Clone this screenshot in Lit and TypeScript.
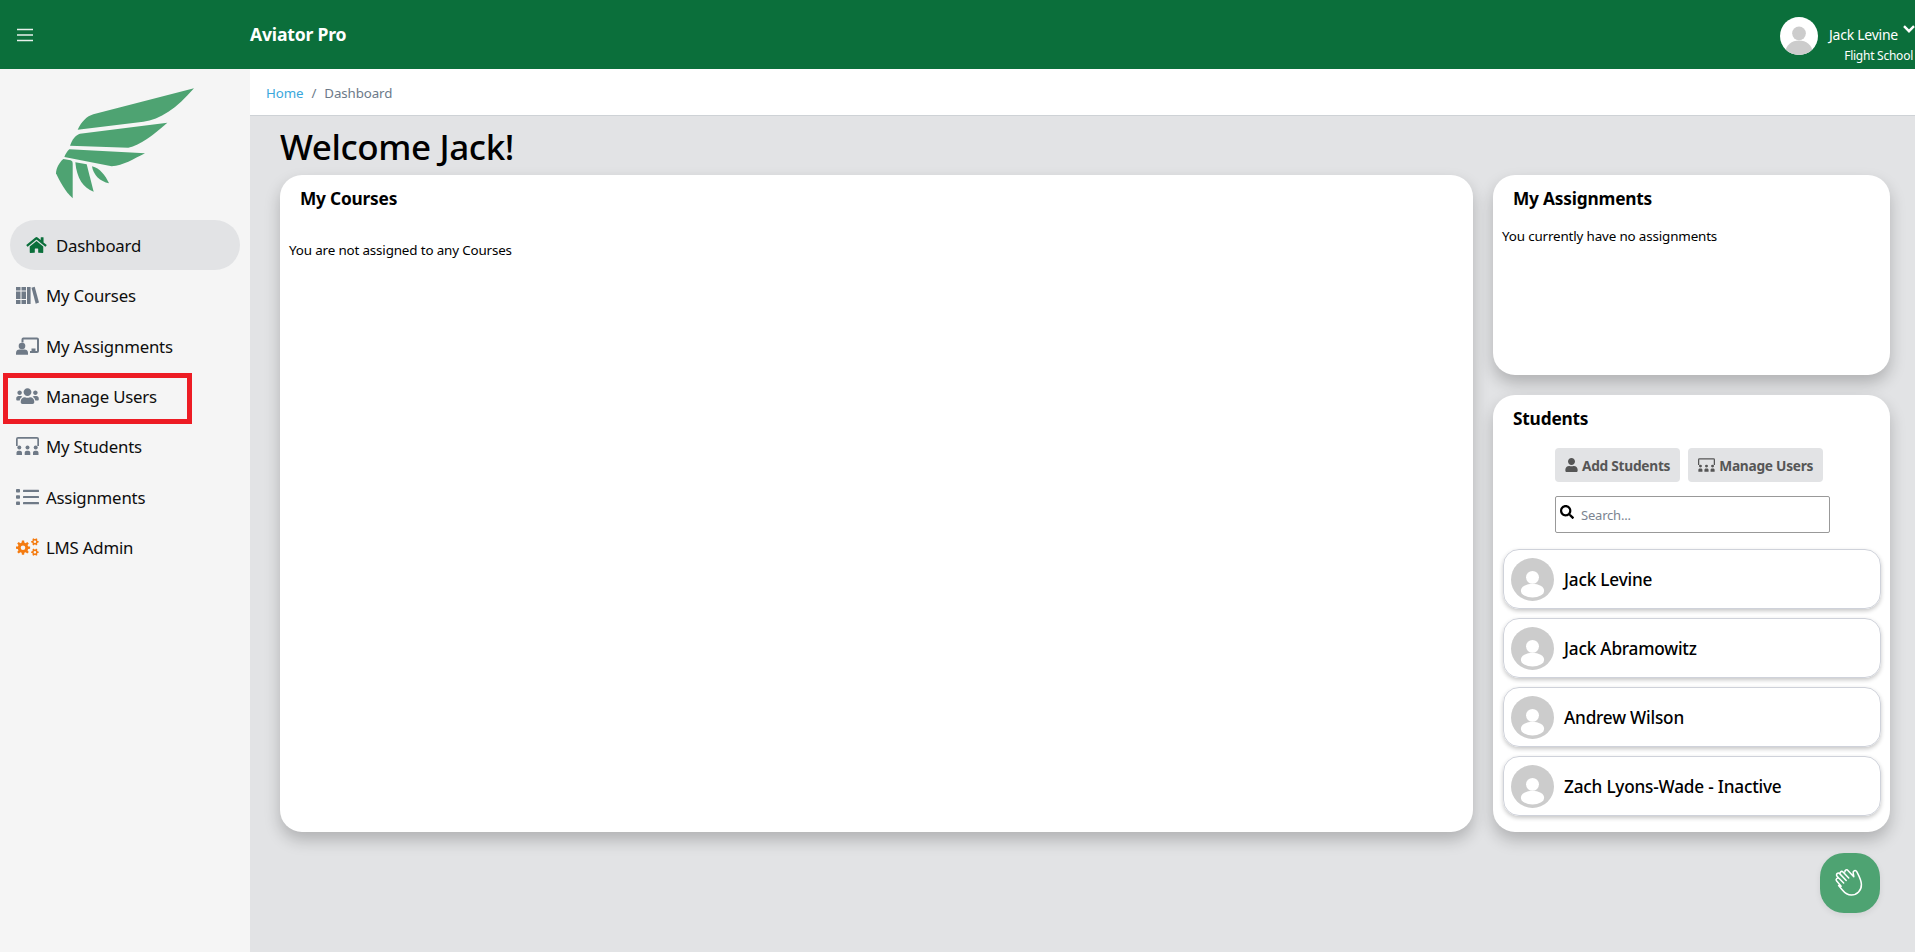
import { LitElement, html, css, svg } from "lit";
import { customElement } from "lit/decorators.js";

const fa = (vb: string, d: string) => html`<svg class="ico" viewBox=${vb} fill="currentColor"><path d=${d}></path></svg>`;
const homeP = "M280.37 148.26L96 300.11V464a16 16 0 0 0 16 16l112.06-.29a16 16 0 0 0 15.92-16V368a16 16 0 0 1 16-16h64a16 16 0 0 1 16 16v95.64a16 16 0 0 0 16 16.05L464 480a16 16 0 0 0 16-16V300L295.67 148.26a12.19 12.19 0 0 0-15.3 0zM571.6 251.47L488 182.56V44.05a12 12 0 0 0-12-12h-56a12 12 0 0 0-12 12v72.61L318.47 43a48 48 0 0 0-61 0L4.34 251.47a12 12 0 0 0-1.6 16.9l25.5 31A12 12 0 0 0 45.15 301l235.22-193.74a12.19 12.19 0 0 1 15.3 0L530.9 301a12 12 0 0 0 16.9-1.6l25.5-31a12 12 0 0 0-1.7-16.93z";
const usersP = "M96 224c35.3 0 64-28.7 64-64s-28.7-64-64-64-64 28.7-64 64 28.7 64 64 64zm448 0c35.3 0 64-28.7 64-64s-28.7-64-64-64-64 28.7-64 64 28.7 64 64 64zm32 32h-64c-17.6 0-33.5 7.1-45.1 18.6 40.3 22.1 68.9 62 75.1 109.4h66c17.7 0 32-14.3 32-32v-32c0-35.3-28.7-64-64-64zm-256 0c61.9 0 112-50.1 112-112S381.9 32 320 32 208 82.1 208 144s50.1 112 112 112zm76.8 32h-8.3c-20.8 10-43.9 16-68.5 16s-47.6-6-68.5-16h-8.3C179.6 288 128 339.6 128 403.2V432c0 26.5 21.5 48 48 48h288c26.5 0 48-21.5 48-48v-28.8c0-63.6-51.6-115.2-115.2-115.2zm-223.7-13.4C161.5 263.1 145.6 256 128 256H64c-35.3 0-64 28.7-64 64v32c0 17.7 14.3 32 32 32h65.9c6.3-47.4 34.9-87.3 75.2-109.4z";
const userP = "M224 256c70.7 0 128-57.3 128-128S294.7 0 224 0 96 57.3 96 128s57.3 128 128 128zm89.6 32h-16.7c-22.2 10.2-46.9 16-72.9 16s-50.6-5.8-72.9-16h-16.7C60.2 288 0 348.2 0 422.4V464c0 26.5 21.5 48 48 48h352c26.5 0 48-21.5 48-48v-41.6c0-74.2-60.2-134.4-134.4-134.4z";
const searchP = "M505 442.7L405.3 343c-4.5-4.5-10.6-7-17-7H372c27.6-35.3 44-79.7 44-128C416 93.1 322.9 0 208 0S0 93.1 0 208s93.1 208 208 208c48.3 0 92.7-16.4 128-44v16.3c0 6.4 2.5 12.5 7 17l99.7 99.7c9.4 9.4 24.6 9.4 33.9 0l28.3-28.3c9.4-9.4 9.4-24.6.1-34zM208 336c-70.7 0-128-57.2-128-128 0-70.7 57.2-128 128-128 70.7 0 128 57.2 128 128 0 70.7-57.2 128-128 128z";

const booksI = html`<svg class="ico" viewBox="0 0 23 18" fill="currentColor">
  <path d="M0 1h4.500v3.500H0zM0 5.500h4.500v7.500H0zM0 14h4.500v4H0zM5.500 1H10v3.500H5.500zM5.500 5.500H10v7.500H5.500zM5.500 14H10v4H5.500zM11 1h3.600v17H11z"></path>
  <path d="M15.500 1.800l3.200-1 4.300 15.700-3.300 1.200z"></path></svg>`;
const assignI = html`<svg class="ico" viewBox="0 0 23 18" fill="currentColor">
  <path d="M7 0.500h14a2 2 0 0 1 2 2v11.500a2 2 0 0 1-2 2h-7v-2h1.500v-2.500h4v2.500h1.500V2.500H7.500V5.500H5.500V2.500a2 2 0 0 1 1.500-2z"></path>
  <circle cx="6" cy="9" r="3.300"></circle>
  <path d="M0 16c0-2.500 1.500-3.500 3.500-3.500h5c2 0 3.500 1 3.500 3.500v1.800H0z"></path></svg>`;
const studentsI = html`<svg class="ico wide" viewBox="0 0 23 18" fill="currentColor">
  <path d="M2 0h19a2 2 0 0 1 2 2v7h-1.700V1.700H1.700V9H0V2a2 2 0 0 1 2-2z"></path>
  <circle cx="3.300" cy="10.500" r="2"></circle><circle cx="11.500" cy="10.500" r="2"></circle><circle cx="19.700" cy="10.500" r="2"></circle>
  <path d="M.5 18v-2.300c0-1.300.9-2 2-2h1.500c1.100 0 2 .7 2 2V18zM8.700 18h5.600v-2.300c0-1.300-.9-2-2-2h-1.600c-1.100 0-2 .7-2 2zM17 18h5.500v-2.300c0-1.300-.9-2-2-2H19c-1.100 0-2 .7-2 2z"></path></svg>`;
const listI = html`<svg class="ico" viewBox="0 0 23 18" fill="currentColor">
  <rect x="0" y="1" width="4" height="3.600" rx=".8"></rect><rect x="0" y="7.200" width="4" height="3.600" rx=".8"></rect><rect x="0" y="13.400" width="4" height="3.600" rx=".8"></rect>
  <rect x="7" y="1.700" width="16" height="2.200" rx=".5"></rect><rect x="7" y="7.900" width="16" height="2.200" rx=".5"></rect><rect x="7" y="14.100" width="16" height="2.200" rx=".5"></rect></svg>`;
const gearPath = (cx: number, cy: number, R: number, r: number, hole: number, teeth: number) => {
  const pts: string[] = [];
  const step = (Math.PI * 2) / teeth;
  for (let i = 0; i < teeth; i++) {
    const a = i * step;
    const at = (rad: number, off: number) => `${(cx + rad * Math.cos(a + off)).toFixed(2)} ${(cy + rad * Math.sin(a + off)).toFixed(2)}`;
    pts.push(at(r, -step * 0.32), at(R, -step * 0.2), at(R, step * 0.2), at(r, step * 0.32));
  }
  return `M${pts.join("L")}Z M${cx - hole} ${cy}a${hole} ${hole} 0 1 0 ${hole * 2} 0a${hole} ${hole} 0 1 0 ${-hole * 2} 0Z`;
};
const cogsI = html`<svg class="ico" viewBox="0 0 23 18" fill="currentColor" fill-rule="evenodd">
  <path d=${gearPath(7, 9.700, 7.200, 5.300, 2.300, 8)}></path>
  <path d=${gearPath(18.900, 3.800, 3.800, 2.800, 1.300, 6)}></path>
  <path d=${gearPath(18.900, 14.200, 3.800, 2.800, 1.300, 6)}></path></svg>`;

let clipSeq = 0;
const person = (bg: string, fg: string, small: boolean) => {
  const id = `cp${clipSeq++}`;
  return html`<svg class="avatar" viewBox="0 0 100 100">
    <defs><clipPath id=${id}><circle cx="50" cy="50" r="50"></circle></clipPath></defs>
    <circle cx="50" cy="50" r="50" fill=${bg}></circle>
    <g clip-path="url(#${id})" fill=${fg}>
      ${small
        ? svg`<circle cx="50" cy="45" r="15"></circle><ellipse cx="50" cy="76" rx="27" ry="16"></ellipse>`
        : svg`<circle cx="50" cy="43" r="18"></circle><ellipse cx="50" cy="90" rx="35" ry="28"></ellipse>`}
    </g></svg>`;
};

const nav = [
  { label: "My Courses", icon: booksI },
  { label: "My Assignments", icon: assignI },
  { label: "Manage Users", icon: fa("0 0 640 512", usersP) },
  { label: "My Students", icon: studentsI },
  { label: "Assignments", icon: listI },
  { label: "LMS Admin", icon: cogsI, cls: "orange" },
];
const students = ["Jack Levine", "Jack Abramowitz", "Andrew Wilson", "Zach Lyons-Wade - Inactive"];

@customElement("app-root")
export class AppRoot extends LitElement {
  static styles = css`
    :host { display: block; height: 100vh; overflow: hidden; position: relative; font-family: "Noto Sans", "Open Sans", sans-serif; color: #000; background: #e2e3e5; }
    .top { height: 69px; background: #0b6f3b; color: #fff; display: flex; align-items: center; }
    .burger { width: 16px; height: 14px; margin-left: 17px; flex: none; }
    .brand { margin-left: 217px; font-size: 17.600px; font-weight: 700; letter-spacing: -0.2px; padding-bottom: 1px; }
    .user { margin-left: auto; display: flex; align-items: flex-start; padding-top: 17px; height: 52px; }
    .user .avatar { width: 38px; height: 38px; flex: none; }
    .uinfo { display: flex; flex-direction: column; align-items: flex-end; margin-left: 11px; margin-right: 2px; font-size: 14px; letter-spacing: -0.25px; }
    .uname { display: flex; align-items: flex-start; gap: 5px; height: 23px; margin-top: 8px; line-height: 20px; margin-right: -2px; }
    .uname svg { width: 12px; height: 8px; margin-top: 0; }
    .school { font-size: 12px; line-height: 16px; }
    .body { display: flex; height: calc(100vh - 69px); }
    .side { width: 250px; flex: none; background: #f5f5f5; display: flex; flex-direction: column; }
    .logo { width: 180px; height: 130px; margin: 6px auto 15px; display: block; flex: none; }
    .navlist { display: flex; flex-direction: column; gap: 0; }
    .item { height: 50.400px; display: flex; align-items: center; padding-left: 16px; gap: 0; font-size: 16.800px; letter-spacing: -0.2px; color: #0d0d0d; }
    .item .ico { width: 23px; height: 18px; color: #6f7a87; margin-right: 8px; flex: none; }
    .item span { position: relative; top: .5px; margin-left: -1px; }
    .item.orange .ico { color: #f47b10; }
    .item.active { height: 50px; margin: 0 10px; padding-left: 16px; border-radius: 25px; background: #e2e3e5; }
    .item.active .ico { width: 21px; height: 18px; color: #0b6f3b; margin-right: 10px; }
    .main { flex: 1; min-width: 0; display: flex; flex-direction: column; }
    .crumb { height: 46px; box-sizing: content-box; background: #fff; border-bottom: 1px solid #ced2d6; padding: 0 0 0 16px; display: flex; align-items: center; font-size: 13.300px; gap: 8px; color: #6c7a89; letter-spacing: -0.1px; flex: none; }
    .crumb > * { position: relative; top: 1px; }
    .crumb a { color: #3aa7dc; }
    h1 { margin: 0 0 0 30px; height: 59px; line-height: 61px; font-size: 35px; font-weight: 500; letter-spacing: -0.4px; flex: none; }
    .grid { display: grid; grid-template-columns: 1193px 397px; gap: 20px; padding-left: 30px; height: 657px; }
    .card { background: #fff; border-radius: 22px; box-shadow: 0 8px 16px rgba(0,0,0,.22); min-height: 0; }
    .right { display: flex; flex-direction: column; gap: 20px; min-height: 0; }
    h2 { margin: 0; font-size: 17.300px; font-weight: 700; letter-spacing: -0.2px; line-height: 22px; }
    .courses h2, .assign h2 { padding: 13px 0 0 20px; }
    .note { font-size: 13.400px; letter-spacing: -0.15px; line-height: 18px; }
    .courses .note { padding: 31px 0 0 9px; }
    .assign { height: 200px; flex: none; }
    .assign .note { padding: 17px 0 0 9px; }
    .studs { height: 437px; box-sizing: border-box; flex: none; padding: 13px 9px 0 10px; }
    .studs h2 { padding-left: 10px; }
    .btns { display: flex; gap: 8px; margin: 18px 0 0 52px; }
    .btn { height: 34px; padding: 0 10px; background: #e2e3e5; border-radius: 4px; font-size: 13.700px; font-weight: 700; color: #565656; letter-spacing: -0.25px; display: flex; align-items: center; gap: 4px; }
    .btn .ico { height: 14px; width: 13px; flex: none; }
    .btn .ico.wide { width: 17px; }
    .search { width: 275px; height: 37px; box-sizing: border-box; margin: 14px 0 16px 52px; border: 1px solid #999; border-radius: 2px; display: flex; padding: 0 0 0 4px; font-size: 13px; color: #7b8491; align-items: center; gap: 7px; letter-spacing: -0.2px; }
    .search .ico { width: 14px; height: 14px; color: #000; margin-top: -6px; flex: none; }
    .rows { display: flex; flex-direction: column; gap: 9px; }
    .row { height: 60px; box-sizing: border-box; border: 1px solid #cfd2da; border-radius: 16px; box-shadow: 0 2px 4px rgba(0,0,0,.22); display: flex; align-items: center; padding-left: 7px; gap: 10px; font-size: 17.200px; font-weight: 500; letter-spacing: -0.2px; }
    .row .avatar { width: 43px; height: 43px; flex: none; }
    .fab { position: absolute; left: 1820px; top: 853px; width: 60px; height: 60px; background: #4ea372; border-radius: 24px; display: flex; align-items: center; justify-content: center; color: #fff; box-shadow: 0 2px 6px rgba(0,0,0,.08); }
    .fab svg { width: 38px; height: 38px; }
    .mark { position: absolute; left: 3px; top: 373px; width: 189px; height: 51px; box-sizing: border-box; border: 5px solid #ed1c24; }
  `;

  render() {
    return html`
      <div class="top">
        <svg class="burger" viewBox="0 0 16 14" stroke="#e8f1ec" stroke-width="1.500"><path d="M0 1.500h16M0 7h16M0 12.500h16"></path></svg>
        <div class="brand">Aviator Pro</div>
        <div class="user">
          ${person("#fff", "#ccc", false)}
          <div class="uinfo">
            <div class="uname"><span>Jack Levine</span><svg viewBox="0 0 12 8" fill="none" stroke="#fff" stroke-width="2.400"><path d="M1 1.200l5 5 5-5"></path></svg></div>
            <div class="school">Flight School</div>
          </div>
        </div>
      </div>
      <div class="body">
        <aside class="side">
          <svg class="logo" viewBox="15 0 540 390" fill="#4ea372">
            <path d="M492 40L190 118C170 124 155 140 143 164L340 140C390 135 440 100 492 40Z"></path>
            <path d="M412 143L150 176C135 180 126 195 120 212L295 218C330 210 370 180 412 143Z"></path>
            <path d="M345 235L118 223C112 228 106 238 103 246L245 274C280 272 310 252 345 235Z"></path>
            <path d="M100 252L122 256C128 258 128 262 128 268L128 370C105 350 90 320 78 295C78 280 88 262 100 252Z"></path>
            <path d="M136 262L170 268L191 350C160 340 140 310 136 262Z"></path>
            <path d="M186 274C210 280 225 300 237 325C210 320 190 300 186 274Z"></path>
          </svg>
          <div class="navlist">
            <div class="item active">${fa("0 0 576 512", homeP)}<span>Dashboard</span></div>
            ${nav.map((n) => html`<div class="item ${n.cls ?? ""}">${n.icon}<span>${n.label}</span></div>`)}
          </div>
        </aside>
        <main class="main">
          <div class="crumb"><a>Home</a><span>/</span><span>Dashboard</span></div>
          <h1>Welcome Jack!</h1>
          <div class="grid">
            <section class="card courses">
              <h2>My Courses</h2>
              <div class="note">You are not assigned to any Courses</div>
            </section>
            <div class="right">
              <section class="card assign">
                <h2>My Assignments</h2>
                <div class="note">You currently have no assignments</div>
              </section>
              <section class="card studs">
                <h2>Students</h2>
                <div class="btns">
                  <div class="btn">${fa("0 0 448 512", userP)}<span>Add Students</span></div>
                  <div class="btn">${studentsI}<span>Manage Users</span></div>
                </div>
                <div class="search">${fa("0 0 512 512", searchP)}<span>Search...</span></div>
                <div class="rows">
                  ${students.map((s) => html`<div class="row">${person("#ccc", "#fff", true)}<span>${s}</span></div>`)}
                </div>
              </section>
            </div>
          </div>
        </main>
      </div>
      <div class="fab">
        <svg viewBox="0 0 30 30" fill="none" stroke="currentColor" stroke-width="1.200" stroke-linecap="round" stroke-linejoin="round">
          <path d="M8 17.500L4.500 13.500a1.400 1.400 0 0 1 2-2L10 15M6 11L4.800 9.600a1.400 1.400 0 0 1 2-2L12 13M7.500 8.300a1.400 1.400 0 0 1 2-2L14 11M11 6.200a1.400 1.400 0 0 1 2-1.500L18 10l-.5-3a1.500 1.500 0 0 1 2.800-1c1.500 3 3.500 6 3.700 10 .2 5-3.500 8.500-8 8.500-3 0-5-1.500-7-4l-3-3.500"></path>
        </svg>
      </div>
      <div class="mark"></div>
    `;
  }
}
